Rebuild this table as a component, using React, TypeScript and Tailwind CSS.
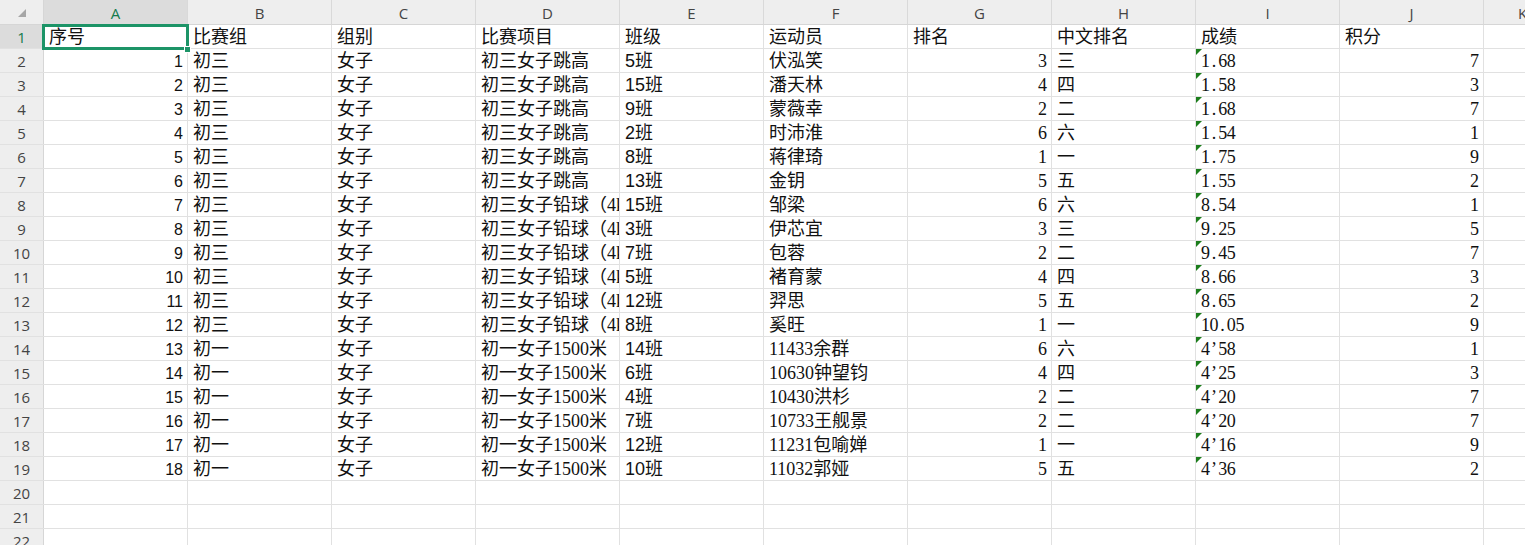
import React from 'react';

type Row = {
  group: string;
  event: string;
  cls: string;
  athlete: string;
  rank: number;
  cnRank: string;
  score: string;
  points: number;
};

const COLS = ['A', 'B', 'C', 'D', 'E', 'F', 'G', 'H', 'I', 'J', 'K'];

const HEADERS = ['序号', '比赛组', '组别', '比赛项目', '班级', '运动员', '排名', '中文排名', '成绩', '积分'];

const ROWS: Row[] = [
  { group: '初三', event: '初三女子跳高', cls: '5班', athlete: '伏泓笑', rank: 3, cnRank: '三', score: '1.68', points: 7 },
  { group: '初三', event: '初三女子跳高', cls: '15班', athlete: '潘天林', rank: 4, cnRank: '四', score: '1.58', points: 3 },
  { group: '初三', event: '初三女子跳高', cls: '9班', athlete: '蒙薇幸', rank: 2, cnRank: '二', score: '1.68', points: 7 },
  { group: '初三', event: '初三女子跳高', cls: '2班', athlete: '时沛淮', rank: 6, cnRank: '六', score: '1.54', points: 1 },
  { group: '初三', event: '初三女子跳高', cls: '8班', athlete: '蒋律琦', rank: 1, cnRank: '一', score: '1.75', points: 9 },
  { group: '初三', event: '初三女子跳高', cls: '13班', athlete: '金钥', rank: 5, cnRank: '五', score: '1.55', points: 2 },
  { group: '初三', event: '初三女子铅球（4kg）', cls: '15班', athlete: '邹梁', rank: 6, cnRank: '六', score: '8.54', points: 1 },
  { group: '初三', event: '初三女子铅球（4kg）', cls: '3班', athlete: '伊芯宜', rank: 3, cnRank: '三', score: '9.25', points: 5 },
  { group: '初三', event: '初三女子铅球（4kg）', cls: '7班', athlete: '包蓉', rank: 2, cnRank: '二', score: '9.45', points: 7 },
  { group: '初三', event: '初三女子铅球（4kg）', cls: '5班', athlete: '褚育蒙', rank: 4, cnRank: '四', score: '8.66', points: 3 },
  { group: '初三', event: '初三女子铅球（4kg）', cls: '12班', athlete: '羿思', rank: 5, cnRank: '五', score: '8.65', points: 2 },
  { group: '初三', event: '初三女子铅球（4kg）', cls: '8班', athlete: '奚旺', rank: 1, cnRank: '一', score: '10.05', points: 9 },
  { group: '初一', event: '初一女子1500米', cls: '14班', athlete: '11433余群', rank: 6, cnRank: '六', score: '4’58', points: 1 },
  { group: '初一', event: '初一女子1500米', cls: '6班', athlete: '10630钟望钧', rank: 4, cnRank: '四', score: '4’25', points: 3 },
  { group: '初一', event: '初一女子1500米', cls: '4班', athlete: '10430洪杉', rank: 2, cnRank: '二', score: '4’20', points: 7 },
  { group: '初一', event: '初一女子1500米', cls: '7班', athlete: '10733王舰景', rank: 2, cnRank: '二', score: '4’20', points: 7 },
  { group: '初一', event: '初一女子1500米', cls: '12班', athlete: '11231包喻婵', rank: 1, cnRank: '一', score: '4’16', points: 9 },
  { group: '初一', event: '初一女子1500米', cls: '10班', athlete: '11032郭娅', rank: 5, cnRank: '五', score: '4’36', points: 2 },
];

const SERIF = "font-['Liberation_Serif','Noto_Sans_CJK_SC',serif]";
const SANS = "font-['Liberation_Sans','Noto_Sans_CJK_SC',sans-serif]";
const HEAD_FONT = "font-['Open_Sans','Liberation_Sans',sans-serif]";

// plain grid cell, 144px wide incl. its right border
const Cell: React.FC<{ className?: string; children?: React.ReactNode }> = ({ className = '', children }) => (
  <div
    className={`relative w-[144px] h-full shrink-0 border-r border-[#e1e1e1] pl-[5px] pt-[1px] overflow-hidden whitespace-nowrap leading-[23px] text-[18px] text-[#111] [text-spacing-trim:space-all] ${className}`}
  >
    {children}
  </div>
);

// text-formatted number: half-width fixed cells like SimSun
const MonoText: React.FC<{ value: string }> = ({ value }) => (
  <span className={`${SERIF} text-[18px]`}>
    {value.split('').map((ch, i) => (
      <span key={i} className="inline-block w-[8.6px] text-center">
        {ch}
      </span>
    ))}
  </span>
);

const ErrorMark = () => (
  <span className="absolute left-0 top-0 w-0 h-0 border-t-[6px] border-r-[6px] border-t-[#1b7d1b] border-r-transparent" />
);

export default function App() {
  const totalRows = 22;

  return (
    <div className={`w-[1525px] h-[545px] overflow-hidden bg-white ${SANS}`}>
      {/* column headers */}
      <div className="flex h-[25px] bg-[#eeeeee] border-b border-[#d6d6d6]">
        <div className="w-[44px] shrink-0 border-r border-[#d6d6d6] flex items-end justify-end pr-[17px] pb-[7px]">
          <span className="w-0 h-0 border-l-[8px] border-l-transparent border-b-[8px] border-b-[#a6a6a6]" />
        </div>
        {COLS.map((c) => (
          <div
            key={c}
            className={`${c === 'K' ? 'w-[78px]' : 'w-[144px]'} shrink-0 border-r border-[#d9d9d9] flex items-center justify-center pt-[2px] text-[15px] ${HEAD_FONT} ${
              c === 'A' ? 'bg-[#dcdcdc] text-[#137a4c]' : 'text-[#444]'
            }`}
          >
            {c}
          </div>
        ))}
      </div>

      {Array.from({ length: totalRows }).map((_, idx) => {
        const rowNo = idx + 1;
        const data = rowNo >= 2 ? ROWS[rowNo - 2] : undefined;
        const isHeader = rowNo === 1;

        return (
          <div key={rowNo} className="flex h-[24px] border-b border-[#e1e1e1]">
            <div
              className={`w-[44px] shrink-0 border-r border-[#d6d6d6] flex items-center justify-center pt-[2px] text-[15px] ${HEAD_FONT} ${
                isHeader ? 'bg-[#dcdcdc] text-[#137a4c]' : 'bg-[#eeeeee] text-[#444]'
              }`}
            >
              {rowNo}
            </div>

            {isHeader &&
              HEADERS.map((h, i) => (
                <Cell key={i} className={i === 0 ? 'overflow-visible z-10' : ''}>
                  {h}
                  {i === 0 && (
                    <>
                      <span className="absolute left-[-2px] top-[-1px] w-[147px] h-[26px] border-[3px] border-[#1c9467] pointer-events-none" />
                      <span className="absolute left-[140px] top-[21px] w-[7px] h-[7px] bg-[#1c9467] border border-white" />
                    </>
                  )}
                </Cell>
              ))}

            {data && (
              <>
                <Cell className={`text-right pr-[4px] ${SANS} !text-[16px]`}>{rowNo - 1}</Cell>
                <Cell>{data.group}</Cell>
                <Cell>女子</Cell>
                <Cell className={SERIF}>{data.event}</Cell>
                <Cell className={SANS}>{data.cls}</Cell>
                <Cell className={SERIF}>{data.athlete}</Cell>
                <Cell className={`text-right pr-[4px] ${SERIF}`}>{data.rank}</Cell>
                <Cell>{data.cnRank}</Cell>
                <Cell>
                  <ErrorMark />
                  <MonoText value={data.score} />
                </Cell>
                <Cell className={`text-right pr-[4px] ${SERIF}`}>{data.points}</Cell>
              </>
            )}

            {!isHeader && !data &&
              Array.from({ length: 10 }).map((__, i) => <Cell key={i} />)}

            <Cell />
          </div>
        );
      })}
    </div>
  );
}
